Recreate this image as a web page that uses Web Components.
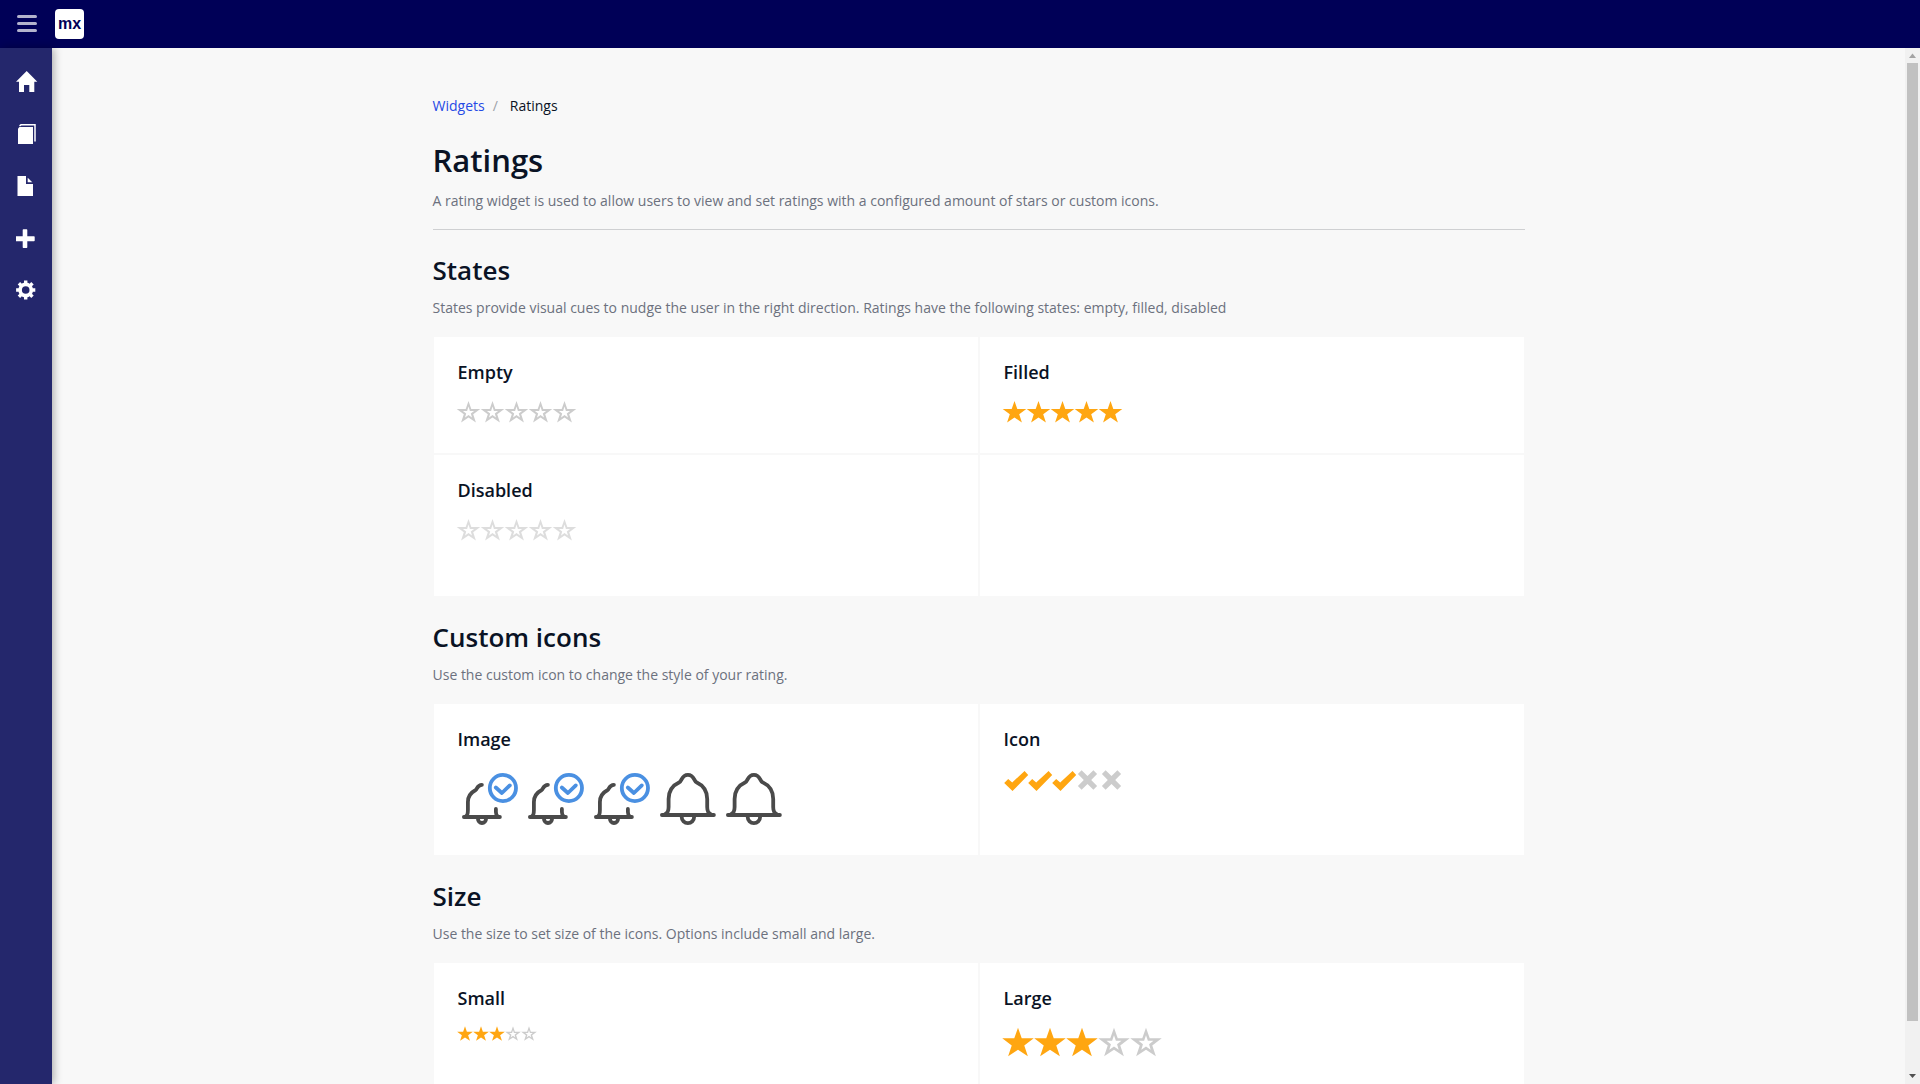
<!DOCTYPE html>
<html lang="en">
<head>
<meta charset="utf-8">
<meta name="viewport" content="width=device-width, initial-scale=1">
<title>Ratings</title>
<style>
  :root {
    --topbar: #000057;
    --sidebar: #24276c;
    --page: #f8f8f8;
    --ink: #0a1325;
    --muted: #6c717e;
    --link: #264ae5;
    --gold: #ffa611;
    --grey: #cccccc;
  }
  body {
    margin: 0;
    font: 14px/24px "Open Sans", sans-serif;
    color: var(--ink);
    background: var(--page);
  }
</style>
</head>
<body>
<app-shell>
  <top-bar slot="header"></top-bar>
  <side-nav slot="nav"></side-nav>
  <bread-crumb parent="Widgets" current="Ratings"></bread-crumb>
  <page-header heading="Ratings">A rating widget is used to allow users to view and set ratings with a configured amount of stars or custom icons.</page-header>
  <doc-section heading="States" description="States provide visual cues to nudge the user in the right direction. Ratings have the following states: empty, filled, disabled">
    <demo-card heading="Empty"><star-rating value="0" label="Empty"></star-rating></demo-card>
    <demo-card heading="Filled"><star-rating value="5" label="Filled"></star-rating></demo-card>
    <demo-card heading="Disabled" spaced><star-rating value="0" disabled label="Disabled"></star-rating></demo-card>
    <demo-card></demo-card>
  </doc-section>
  <doc-section heading="Custom icons" description="Use the custom icon to change the style of your rating.">
    <demo-card heading="Image"><star-rating value="3" kind="bell" label="Image"></star-rating></demo-card>
    <demo-card heading="Icon"><star-rating value="3" kind="tick" label="Icon"></star-rating></demo-card>
  </doc-section>
  <doc-section heading="Size" description="Use the size to set size of the icons. Options include small and large.">
    <demo-card heading="Small" spaced><star-rating value="3" size="small" label="Small"></star-rating></demo-card>
    <demo-card heading="Large" spaced><star-rating value="3" size="large" label="Large"></star-rating></demo-card>
  </doc-section>
  <scroll-rail slot="rail"></scroll-rail>
</app-shell>

<script>
const define = (name, render) => customElements.define(name, class extends HTMLElement {
  connectedCallback() {
    if (!this.shadowRoot) this.attachShadow({ mode: "open" }).innerHTML = render(this);
  }
});

define("app-shell", () => `
  <style>
    :host { display: flex; flex-direction: column; height: 100vh; overflow: hidden; }
    .body { flex: 1; display: flex; min-height: 0; }
    main { flex: 1; min-width: 0; overflow: hidden; }
    .content { max-width: 1092px; margin: 0 auto; padding: 46px 24px 24px; }
  </style>
  <slot name="header"></slot>
  <div class="body">
    <slot name="nav"></slot>
    <main><div class="content"><slot></slot></div></main>
    <slot name="rail"></slot>
  </div>`);

define("top-bar", () => `
  <style>
    :host { display: block; background: var(--topbar); }
    header { display: flex; align-items: center; gap: 18px; height: 48px; padding-left: 17px; }
    button { display: flex; flex-direction: column; gap: 4px; width: 20px; padding: 0 0 2px; border: 0; background: none; }
    i { height: 3px; border-radius: 2px; background: #b3b3cd; }
    a { display: flex; align-items: center; justify-content: center; width: 29px; height: 30px; border-radius: 4px;
        background: #fff; color: var(--topbar); text-decoration: none;
        font: bold 16px/20px "Liberation Sans Narrow", "Liberation Sans", sans-serif; }
  </style>
  <header>
    <button type="button" aria-label="Toggle menu"><i></i><i></i><i></i></button>
    <a href="#home" aria-label="Home">mx</a>
  </header>`);

const navIcons = {
  Home: `<path d="M12.7 1 23.3 11.7H20.3V22H15.3V15H10V22H5V11.7H2Z"/>`,
  Pages: `<path d="M4 6.5 5.5 5H19V22H4Z"/><path d="M5.5 3.8 7 2.8H21V19.5" fill="none" stroke="#fff" stroke-width="1.5"/>`,
  File: `<path d="M3.5 2H12V10H19V22H3.5Z"/><path d="M13.7 3.7V8.3H18.3Z"/>`,
  Add: `<path d="M8.7 4Q8.7 3.3 9.4 3.3H12.6Q13.3 3.3 13.3 4V10.3H20Q20.7 10.3 20.7 11V14.5Q20.7 15.2 20 15.2H13.3V21.3Q13.3 22 12.6 22H9.4Q8.7 22 8.7 21.3V15.2H2V10.3H8.7Z"/>`,
  Settings: `<g fill="none" stroke="#fff"><circle cx="11.7" cy="12" r="5.6" stroke-width="3.6"/><path stroke-width="3.4" d="M11.7 2.4V6M11.7 18V21.6M2.1 12H6M17.4 12H21.3M4.9 5.2 7.6 7.9M15.8 16.1 18.5 18.8M4.9 18.8 7.6 16.1M15.8 7.9 18.5 5.2"/></g>`
};
define("side-nav", () => `
  <style>
    :host { display: block; width: 52px; flex: none; background: var(--sidebar); box-shadow: 2px 0 8px rgba(0,0,0,.3); z-index: 1; }
    nav { display: flex; flex-direction: column; padding-top: 8px; }
    a { display: flex; align-items: center; justify-content: center; height: 52px; }
    svg { width: 24px; height: 24px; fill: #fff; }
  </style>
  <nav>${Object.entries(navIcons).map(([n, p]) => `<a href="#${n.toLowerCase()}" aria-label="${n}"><svg viewBox="0 0 24 24">${p}</svg></a>`).join("")}</nav>`);

define("bread-crumb", el => `
  <style>
    :host { display: block; margin-bottom: 23px; }
    nav { display: flex; }
    a { color: var(--link); text-decoration: none; }
    .sep { margin: 0 12px 0 8px; color: #9da1a8; }
  </style>
  <nav><a href="#widgets">${el.getAttribute("parent")}</a><span class="sep">/</span><span>${el.getAttribute("current")}</span></nav>`);

define("page-header", el => `
  <style>
    :host { display: block; padding-bottom: 16px; border-bottom: 1px solid #cfd0d2; }
    h1 { margin: 0 0 10px; font-size: 31px; line-height: 38px; font-weight: 600; }
    p { margin: 0; color: var(--muted); }
  </style>
  <h1>${el.getAttribute("heading")}</h1><p><slot></slot></p>`);

define("doc-section", el => `
  <style>
    :host { display: block; padding-top: 24px; }
    h2 { margin: 0 0 10px; font-size: 26px; line-height: 32px; font-weight: 600; }
    p { margin: 0 0 16px; color: var(--muted); }
    .grid { display: grid; grid-template-columns: 1fr 1fr; }
  </style>
  <h2>${el.getAttribute("heading")}</h2><p>${el.getAttribute("description")}</p>
  <div class="grid"><slot></slot></div>`);

define("demo-card", el => `
  <style>
    :host { display: block; padding: 24px; border: 1px solid var(--page); background: #fff; }
    :host([spaced]) { padding-bottom: 49px; }
    h3 { margin: 0 0 16px; font-size: 18px; line-height: 22px; font-weight: 600; }
  </style>
  ${el.hasAttribute("heading") ? `<h3>${el.getAttribute("heading")}</h3>` : ""}<slot></slot>`);

const outline = "M11.5 2 14.3 10H23.3L16.2 15.3 18.9 23.5 11.5 18.6 4.1 23.5 6.8 15.3-.3 10H8.7Z";
const ratingIcons = {
  star: {
    box: "1 0 24 24",
    on: `<path fill="var(--gold)" d="${outline}"/>`,
    off: `<path fill="var(--grey)" fill-rule="evenodd" d="${outline}M11.5 7.6 10.1 11.9H5.9L9.2 14.5 8 18.6 11.5 16.1 15 18.6 13.8 14.5 17.1 11.9H12.9Z"/>`
  },
  tick: {
    box: "0.6 0 24 24",
    on: `<path fill="var(--gold)" d="M.8 17 4.8 12.9 8.8 16.4 21.2 5 24.8 9 9.1 25Z"/>`,
    off: `<path fill="var(--grey)" d="M6.2 4.2 12.1 10 18 4.2 21.7 7.9 15.8 14 21.7 20.1 18 23.8 12.1 18 6.2 23.8 2.5 20.1 8.4 14 2.5 7.9Z"/>`
  },
  bell: {
    box: "0.6 0 66 65",
    on: `<g fill="none" stroke-width="3.8" stroke-linecap="round" stroke-linejoin="round"><path stroke="#4a4a4a" d="M6.5 51H42.5M8.6 50.2C10.4 49.2 10.5 47 10.5 44V36C10.5 30 13.5 26.5 18.3 24 19.8 23 19.8 18.8 24.5 18.8M38.5 43V46Q38.5 49 40.3 50.4M20.5 52.6A4.1 4.4 0 0 0 28.7 52.6"/><g stroke="#4a90e2"><circle cx="45.5" cy="22" r="13.1"/><path d="M38.4 21.5 44.5 27 52.4 19.4"/></g></g>`,
    off: `<path fill="none" stroke="#4a4a4a" stroke-width="3.8" stroke-linecap="round" stroke-linejoin="round" d="M6.5 49H58.5M9.5 48.3C12.8 47 13.2 44.5 13.2 41V33C13.2 24.5 16.8 19.5 24 16.2 26.8 15 26 8.9 32.5 8.9S38.2 15 41 16.2C48.2 19.5 51.8 24.5 51.8 33V41C51.8 44.5 52.2 47 55.5 48.3M26.3 51A6.2 6.2 0 0 0 38.7 51"/>`
  }
};
define("star-rating", el => {
  const icon = ratingIcons[el.getAttribute("kind") || "star"];
  const value = Number(el.getAttribute("value"));
  const off = el.hasAttribute("disabled") ? "disabled" : "";
  return `
  <style>
    :host { display: flex; min-height: 30px; --w: 24px; --h: 24px; }
    :host([size=small]) { --w: 16px; --h: 16px; }
    :host([size=large]) { --w: 32px; --h: 32px; }
    :host([kind=bell]) { --w: 66px; --h: 65px; }
    :host([disabled]) { opacity: .65; }
    button { display: block; width: var(--w); height: var(--h); padding: 0; border: 0; background: none; }
    svg { display: block; width: 100%; height: 100%; overflow: visible; }
  </style>
  ${[1, 2, 3, 4, 5].map(n => `<button type="button" ${off} aria-label="${el.getAttribute("label")}: ${n} of 5"><svg viewBox="${icon.box}">${n <= value ? icon.on : icon.off}</svg></button>`).join("")}`;
});

define("scroll-rail", () => `
  <style>
    :host { display: flex; flex-direction: column; flex: none; width: 15px; background: #f1f1f1; }
    svg { display: block; width: 15px; height: 15px; flex: none; }
    .thumb { flex: 20; margin: 0 2px; background: #c1c1c1; }
    .rest { flex: 1; }
  </style>
  <svg viewBox="0 0 15 15"><path fill="#a3a3a3" d="M7.5 5.5 11 10H4Z"/></svg>
  <div class="thumb"></div><div class="rest"></div>
  <svg viewBox="0 0 15 15"><path fill="#505050" d="M4 5H11L7.5 9Z"/></svg>`);
</script>
</body>
</html>
